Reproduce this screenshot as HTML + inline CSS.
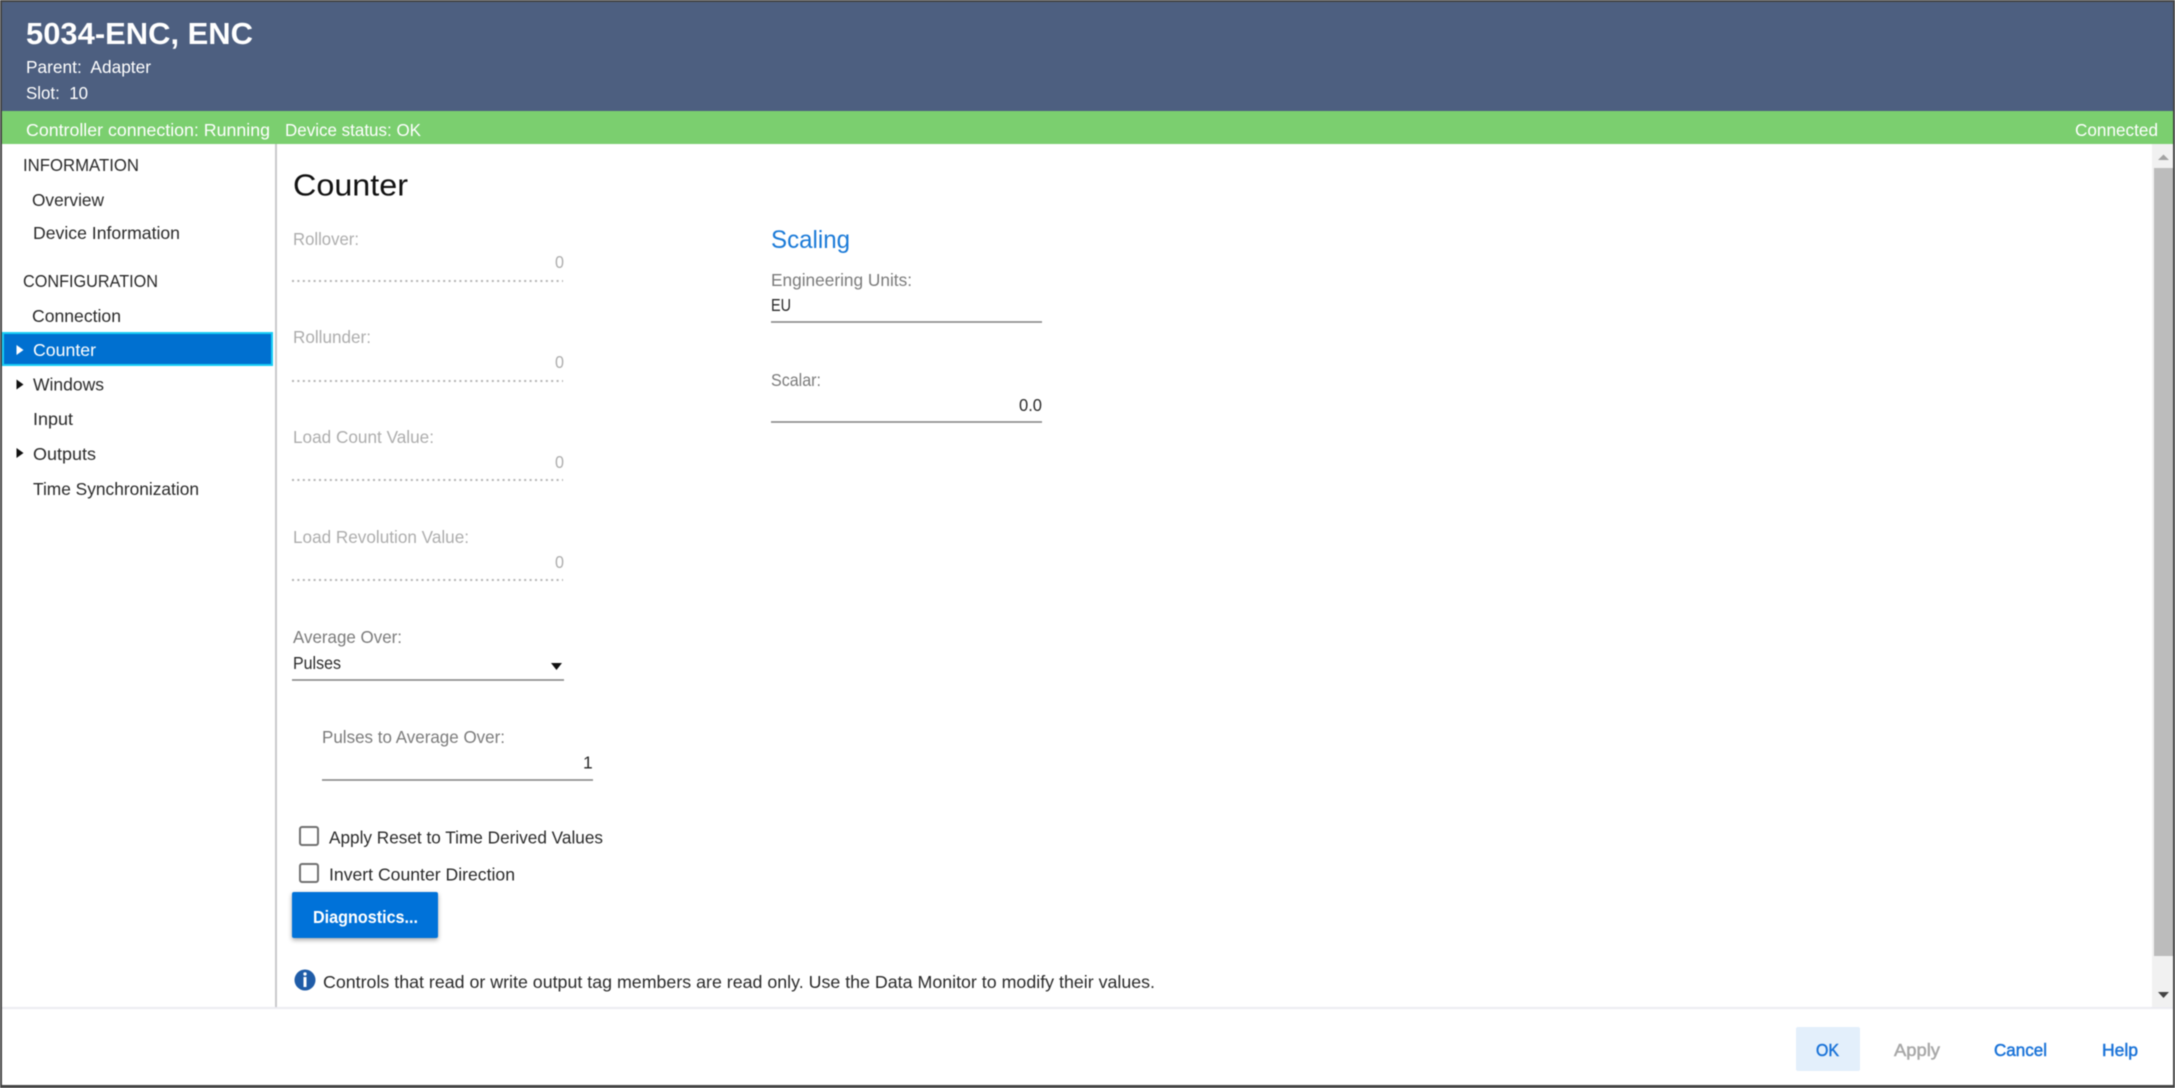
<!DOCTYPE html>
<html lang="en">
<head>
<meta charset="utf-8">
<title>5034-ENC, ENC</title>
<style>
html,body{margin:0;padding:0;width:2175px;height:1088px;overflow:hidden;background:#fff}
svg{display:block;filter:blur(.4px)}
text{font-family:"Liberation Sans",sans-serif;font-size:17.5px;fill:#2a2a2a}
.w{fill:#fff}
.g{fill:#adadad}
.l{fill:#7b7b7b}
.b{font-weight:bold}
.a{fill:#1a73d8;stroke:#1a73d8;stroke-width:.5px}
</style>
</head>
<body>
<svg width="2175" height="1088" viewBox="0 0 2175 1088" xmlns="http://www.w3.org/2000/svg">
<defs>
<filter id="s" x="-10%" y="-20%" width="120%" height="150%"><feDropShadow dx="0" dy="2" stdDeviation="2.500" flood-color="#000" flood-opacity=".35"/></filter>
</defs>
<rect width="2175" height="1088" fill="#fff"/>
<!-- header -->
<rect x="2" y="2" width="2171" height="109" fill="#4d5f80"/>
<rect x="2" y="111" width="2171" height="33" fill="#7bcf6f"/>
<text class="w b" x="26" y="44" style="font-size:31px" textLength="227" lengthAdjust="spacingAndGlyphs">5034-ENC, ENC</text>
<text class="w" x="26" y="73" xml:space="preserve" textLength="125" lengthAdjust="spacingAndGlyphs">Parent:  Adapter</text>
<text class="w" x="26" y="99" xml:space="preserve" textLength="62" lengthAdjust="spacingAndGlyphs">Slot:  10</text>
<text class="w" x="26" y="136" textLength="244" lengthAdjust="spacingAndGlyphs">Controller connection: Running</text>
<text class="w" x="285" y="136" textLength="136" lengthAdjust="spacingAndGlyphs">Device status: OK</text>
<text class="w" x="2075" y="136" textLength="83" lengthAdjust="spacingAndGlyphs">Connected</text>

<!-- sidebar -->
<rect x="275" y="144" width="2" height="864" fill="#c9c9cc"/>
<text x="23" y="171" textLength="116" lengthAdjust="spacingAndGlyphs">INFORMATION</text>
<text x="32" y="206" textLength="72" lengthAdjust="spacingAndGlyphs">Overview</text>
<text x="33" y="239" textLength="147" lengthAdjust="spacingAndGlyphs">Device Information</text>
<text x="23" y="287" textLength="135" lengthAdjust="spacingAndGlyphs">CONFIGURATION</text>
<text x="32" y="322" textLength="89" lengthAdjust="spacingAndGlyphs">Connection</text>
<rect x="3" y="333" width="269" height="32" fill="#0070d0" stroke="#18cdf5" stroke-width="2"/>
<path d="M16.500 345L23.500 350L16.500 355Z" fill="#fff"/>
<text class="w" x="33" y="356" textLength="63" lengthAdjust="spacingAndGlyphs">Counter</text>
<path d="M16.500 379.500L23.500 384.500L16.500 389.500Z" fill="#111"/>
<text x="33" y="390.500" textLength="71" lengthAdjust="spacingAndGlyphs">Windows</text>
<text x="33" y="425" textLength="40" lengthAdjust="spacingAndGlyphs">Input</text>
<path d="M16.500 448L23.500 453L16.500 458Z" fill="#111"/>
<text x="33" y="460" textLength="63" lengthAdjust="spacingAndGlyphs">Outputs</text>
<text x="33" y="495" textLength="166" lengthAdjust="spacingAndGlyphs">Time Synchronization</text>

<!-- main left column -->
<text x="293" y="195.500" style="font-size:31px;fill:#111" textLength="115" lengthAdjust="spacingAndGlyphs">Counter</text>

<text class="g" x="293" y="245" textLength="66" lengthAdjust="spacingAndGlyphs">Rollover:</text>
<text class="g" x="555" y="268" textLength="9" lengthAdjust="spacingAndGlyphs">0</text>
<line x1="292" y1="281" x2="563" y2="281" stroke="#b4b4b4" stroke-width="2" stroke-dasharray="2 3.400"/>

<text class="g" x="293" y="343" textLength="78" lengthAdjust="spacingAndGlyphs">Rollunder:</text>
<text class="g" x="555" y="368" textLength="9" lengthAdjust="spacingAndGlyphs">0</text>
<line x1="292" y1="381" x2="563" y2="381" stroke="#b4b4b4" stroke-width="2" stroke-dasharray="2 3.400"/>

<text class="g" x="293" y="443" textLength="141" lengthAdjust="spacingAndGlyphs">Load Count Value:</text>
<text class="g" x="555" y="468" textLength="9" lengthAdjust="spacingAndGlyphs">0</text>
<line x1="292" y1="480" x2="563" y2="480" stroke="#b4b4b4" stroke-width="2" stroke-dasharray="2 3.400"/>

<text class="g" x="293" y="543" textLength="176" lengthAdjust="spacingAndGlyphs">Load Revolution Value:</text>
<text class="g" x="555" y="568" textLength="9" lengthAdjust="spacingAndGlyphs">0</text>
<line x1="292" y1="580" x2="563" y2="580" stroke="#b4b4b4" stroke-width="2" stroke-dasharray="2 3.400"/>

<text class="l" x="293" y="643" textLength="109" lengthAdjust="spacingAndGlyphs">Average Over:</text>
<text x="293" y="669" textLength="48" lengthAdjust="spacingAndGlyphs">Pulses</text>
<path d="M551 663H562L556.500 670Z" fill="#111"/>
<rect x="292" y="679.250" width="272" height="1.500" fill="#808080"/>

<text class="l" x="322" y="743" textLength="183" lengthAdjust="spacingAndGlyphs">Pulses to Average Over:</text>
<text x="583" y="768.500" textLength="9.700" lengthAdjust="spacingAndGlyphs">1</text>
<rect x="322" y="779.250" width="271" height="1.500" fill="#808080"/>

<rect x="300" y="827" width="18" height="18" rx="2" fill="#fff" stroke="#707070" stroke-width="2"/>
<text x="329" y="843.500" textLength="274" lengthAdjust="spacingAndGlyphs">Apply Reset to Time Derived Values</text>
<rect x="300" y="864" width="18" height="18" rx="2" fill="#fff" stroke="#707070" stroke-width="2"/>
<text x="329" y="880.500" textLength="186" lengthAdjust="spacingAndGlyphs">Invert Counter Direction</text>

<rect x="292" y="892" width="146" height="46" rx="2" fill="#0072d9" filter="url(#s)"/>
<text class="w b" x="313" y="923" textLength="105" lengthAdjust="spacingAndGlyphs">Diagnostics...</text>

<circle cx="305" cy="980" r="10.500" fill="#1f5ca8"/>
<circle cx="305" cy="974" r="1.700" fill="#fff"/>
<rect x="303.500" y="977" width="3" height="10" fill="#fff"/>
<text x="323" y="988" textLength="832" lengthAdjust="spacingAndGlyphs">Controls that read or write output tag members are read only. Use the Data Monitor to modify their values.</text>

<!-- scaling column -->
<text x="771" y="248" style="font-size:25px;fill:#1a7ad8" textLength="79" lengthAdjust="spacingAndGlyphs">Scaling</text>
<text class="l" x="771" y="286" textLength="141" lengthAdjust="spacingAndGlyphs">Engineering Units:</text>
<text x="771" y="311" textLength="20" lengthAdjust="spacingAndGlyphs">EU</text>
<rect x="771" y="321.250" width="271" height="1.500" fill="#808080"/>
<text class="l" x="771" y="386" textLength="50" lengthAdjust="spacingAndGlyphs">Scalar:</text>
<text x="1019" y="411" textLength="23" lengthAdjust="spacingAndGlyphs">0.0</text>
<rect x="771" y="421.250" width="271" height="1.500" fill="#808080"/>

<!-- scrollbar -->
<rect x="2152" y="144" width="21" height="864" fill="#f1f1f1"/>
<rect x="2154" y="168" width="19" height="788" fill="#bcbcbc"/>
<path d="M2158 160H2169L2163.500 154.500Z" fill="#a3a3a3"/>
<path d="M2158 992H2169L2163.500 998Z" fill="#444"/>

<!-- footer -->
<rect x="2" y="1007" width="2171" height="2" fill="#ebebf1"/>
<rect x="1796" y="1027" width="64" height="44" rx="2" fill="#e3effb"/>
<text class="a" x="1816" y="1056" textLength="23" lengthAdjust="spacingAndGlyphs">OK</text>
<text x="1894" y="1056" style="fill:#a8a8a8;stroke:#a8a8a8;stroke-width:.5px" textLength="46" lengthAdjust="spacingAndGlyphs">Apply</text>
<text class="a" x="1994" y="1056" textLength="53" lengthAdjust="spacingAndGlyphs">Cancel</text>
<text class="a" x="2102" y="1056" textLength="36" lengthAdjust="spacingAndGlyphs">Help</text>

<!-- outer frame -->
<rect x="0" y="0" width="2175" height="2" fill="#444"/>
<rect x="0" y="0" width="2" height="1088" fill="#444"/>
<rect x="2173" y="0" width="2" height="1088" fill="#444"/>
<rect x="0" y="1085" width="2175" height="3" fill="#444"/>
</svg>
</body>
</html>
